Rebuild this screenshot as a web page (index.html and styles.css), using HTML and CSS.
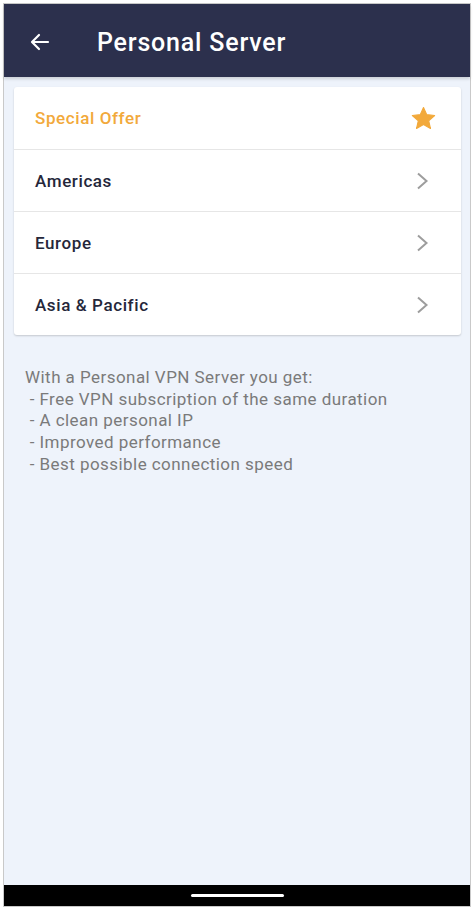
FILE: index.html
```html
<!DOCTYPE html>
<html lang="en">
<head>
    <meta charset="UTF-8">
    <meta name="viewport" content="width=device-width, initial-scale=1.0">
    <title>Personal Server</title>
    <link rel="stylesheet" href="styles.css">
</head>
<body>

    <div class="screen">
        <header class="app-bar">
            <svg class="back-icon" width="24" height="24" viewBox="0 0 24 24">
                <path d="M20 12H4.5M11 5l-7 7 7 7" fill="none" stroke="#fff" stroke-width="2.2" stroke-linecap="round" stroke-linejoin="round"/>
            </svg>
            <h1>Personal Server</h1>
        </header>

        <main class="content">
            <div class="region-list">
                <div class="region-row offer">
                    <span>Special Offer</span>
                    <svg width="27" height="27" viewBox="0 0 24 24">
                        <path d="M12 2.2l2.9 6.4 7 .7-5.3 4.7 1.6 6.9L12 17.3l-6.2 3.6 1.6-6.9-5.3-4.7 7-.7z" fill="#f2a93b" stroke="#f2a93b" stroke-width="1" stroke-linejoin="round"/>
                    </svg>
                </div>
                <div class="region-row">
                    <span>Americas</span>
                    <svg class="chevron" width="16" height="24" viewBox="0 0 16 24">
                        <path d="M3 4.5l8.5 7.5-8.5 7.5" fill="none" stroke="#9d9d9d" stroke-width="2"/>
                    </svg>
                </div>
                <div class="region-row">
                    <span>Europe</span>
                    <svg class="chevron" width="16" height="24" viewBox="0 0 16 24">
                        <path d="M3 4.5l8.5 7.5-8.5 7.5" fill="none" stroke="#9d9d9d" stroke-width="2"/>
                    </svg>
                </div>
                <div class="region-row">
                    <span>Asia &amp; Pacific</span>
                    <svg class="chevron" width="16" height="24" viewBox="0 0 16 24">
                        <path d="M3 4.5l8.5 7.5-8.5 7.5" fill="none" stroke="#9d9d9d" stroke-width="2"/>
                    </svg>
                </div>
            </div>

            <p class="info">With a Personal VPN Server you get:<br>
            &nbsp;- Free VPN subscription of the same duration<br>
            &nbsp;- A clean personal IP<br>
            &nbsp;- Improved performance<br>
            &nbsp;- Best possible connection speed</p>
        </main>

        <div class="nav-bar">
            <div class="home-pill"></div>
        </div>
    </div>

</body>
</html>
```

FILE: styles.css
```css
body {
    margin: 0;
    background-color: #fff;
    font-family: Roboto, "Liberation Sans", sans-serif;
}
.screen {
    margin: 3px;
    height: 902px;
    border: 1px solid #c9c9c9;
    display: flex;
    flex-direction: column;
    background-color: #eef3fb;
}
.app-bar {
    height: 73px;
    box-sizing: border-box;
    padding: 3px 0 0 24px;
    flex-shrink: 0;
    background-color: #2c304d;
    display: flex;
    align-items: center;
    box-shadow: 0 2px 3px rgba(0, 0, 0, 0.15);
}
.back-icon {
    margin-right: 45px;
}
.app-bar h1 {
    margin: 0;
    color: #fff;
    font-size: 25px;
    font-weight: 500;
    letter-spacing: 0.8px;
}
.content {
    flex: 1;
    padding: 10px 9px 0 10px;
}
.region-list {
    background-color: #fff;
    border-radius: 3px;
    box-shadow: 0 1px 2px rgba(0, 0, 0, 0.18);
}
.region-row {
    height: 62px;
    display: flex;
    align-items: center;
    justify-content: space-between;
    padding: 0 24px 0 21px;
    border-top: 1px solid #e6e6e6;
    box-sizing: border-box;
    color: #25273a;
    font-size: 17px;
    font-weight: 500;
    letter-spacing: 0.6px;
}
.region-row:first-child {
    border-top: none;
}
.region-row.offer {
    color: #f2a93b;
    padding-right: 24px;
}
.chevron {
    margin-right: 6px;
}
.info {
    margin: 32px 0 0 11px;
    color: #7a7a7a;
    font-size: 17px;
    line-height: 21.7px;
    letter-spacing: 0.45px;
}
.nav-bar {
    height: 21px;
    flex-shrink: 0;
    background-color: #000;
    display: flex;
    justify-content: center;
    align-items: center;
}
.home-pill {
    width: 93px;
    height: 3px;
    border-radius: 2px;
    background-color: #fff;
}
```
